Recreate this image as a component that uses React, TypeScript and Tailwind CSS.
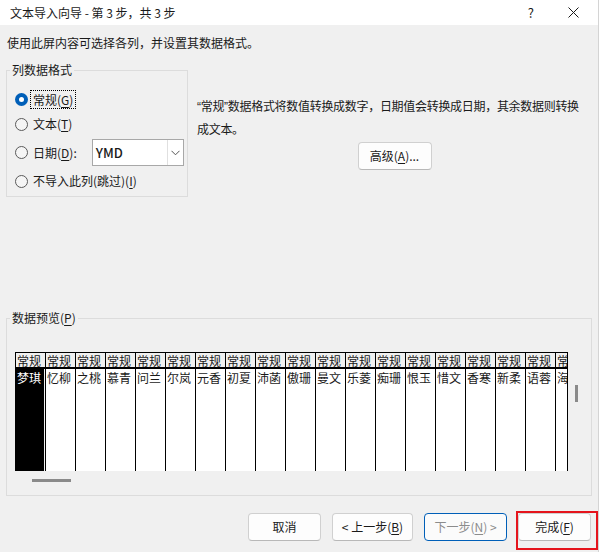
import React from 'react';

const names = [
  '梦琪', '忆柳', '之桃', '慕青', '问兰', '尔岚', '元香', '初夏', '沛菡', '傲珊',
  '曼文', '乐菱', '痴珊', '恨玉', '惜文', '香寒', '新柔', '语蓉', '海安',
];

const font = { fontFamily: '"Noto Sans CJK SC", "Microsoft YaHei", sans-serif' };

function Radio({ checked }: { checked?: boolean }) {
  if (checked) {
    return (
      <span className="w-[13px] h-[13px] rounded-full bg-[#005fb8] flex items-center justify-center shrink-0">
        <span className="w-[5px] h-[5px] rounded-full bg-white" />
      </span>
    );
  }
  return <span className="w-[13px] h-[13px] rounded-full border border-[#5a5a5a] bg-[#f5f5f5] shrink-0" />;
}

function Key({ k }: { k: string }) {
  return <span className="underline underline-offset-2">{k}</span>;
}

export default function App() {
  return (
    <div
      className="w-[599px] h-[552px] bg-[#f0f0f0] text-[12px] text-[#1a1a1a] flex flex-col overflow-hidden relative border-r border-[#d4d4d4]"
      style={font}
    >
      {/* title bar */}
      <div className="h-[25px] bg-white flex items-center shrink-0">
        <span className="pl-[10px] leading-[16px]">文本导入向导 - 第 3 步，共 3 步</span>
        <span className="ml-auto mr-[34px] text-[13px] leading-none">?</span>
        <svg width="11" height="11" viewBox="0 0 11 11" className="mr-[19px]">
          <path d="M0.5 0.5 L10.5 10.5 M10.5 0.5 L0.5 10.5" stroke="#1a1a1a" strokeWidth="1" />
        </svg>
      </div>

      <div className="pl-[7px] mt-[10px] leading-[16px]">使用此屏内容可选择各列，并设置其数据格式。</div>

      {/* format + description */}
      <div className="flex mt-[11px]">
        <fieldset className="ml-[6px] w-[182px] border border-[#dcdcdc] pb-[5px]">
          <legend className="ml-[3px] px-[2px] leading-[16px]">列数据格式</legend>
          <div className="flex flex-col gap-[5px] pt-[11px] pl-[8px]">
            <div className="h-[20px] flex items-center gap-[3px]">
              <Radio checked />
              <span className="outline outline-1 outline-dotted outline-black px-[2px] leading-[17px]">
                常规(<Key k="G" />)
              </span>
            </div>
            <div className="h-[20px] flex items-center gap-[5px]">
              <Radio />
              <span>文本(<Key k="T" />)</span>
            </div>
            <div className="h-[27px] flex items-center gap-[5px]">
              <Radio />
              <span>日期(<Key k="D" />):</span>
              <div className="ml-[10px] w-[92px] h-[27px] bg-white border border-[#a8a8a8] flex items-center">
                <span className="pl-[3px] text-[13px] font-medium flex-1">YMD</span>
                <span className="w-[16px] h-full border-l border-[#e0e0e0] flex items-center justify-center">
                  <svg width="9" height="6" viewBox="0 0 9 6">
                    <path d="M0.5 0.8 L4.5 4.8 L8.5 0.8" fill="none" stroke="#555" strokeWidth="1" />
                  </svg>
                </span>
              </div>
            </div>
            <div className="h-[20px] flex items-center gap-[5px]">
              <Radio />
              <span>不导入此列(跳过)(<Key k="I" />)</span>
            </div>
          </div>
        </fieldset>

        <div className="ml-[9px] w-[395px] pt-[33px] flex flex-col">
          <p className="leading-[21px] whitespace-nowrap tracking-[-0.3px]">
            <span style={{ fontFamily: '"Liberation Sans", sans-serif' }}>“</span>常规
            <span style={{ fontFamily: '"Liberation Sans", sans-serif' }}>”</span>
            数据格式将数值转换成数字，日期值会转换成日期，其余数据则转换
            <br />
            成文本。
          </p>
          <div className="flex justify-center mt-[3px]">
            <button className="w-[74px] h-[28px] bg-[#fdfdfd] border border-[#d0d0d0] border-b-[#b8b8b8] rounded-[4px]">
              高级(<Key k="A" />)...
            </button>
          </div>
        </div>
      </div>

      {/* data preview */}
      <fieldset className="mt-[113px] ml-[6px] w-[586px] h-[186px] border border-[#dcdcdc]">
        <legend className="ml-[3px] px-[2px] leading-[16px]">数据预览(<Key k="P" />)</legend>
        <div className="flex mt-[26px] pl-[8px]">
          <div className="w-[553px] h-[119px] flex overflow-hidden border-t border-r border-black">
            {names.map((n, i) => (
              <div key={n} className="w-[30px] shrink-0 border-l border-black flex flex-col">
                <div className="h-[16px] leading-[16px] border-b-2 border-black pl-px whitespace-nowrap overflow-hidden bg-[#f0f0f0]">
                  常规
                </div>
                <div
                  className={
                    i === 0
                      ? 'flex-1 bg-black text-white leading-[18px] pl-px mr-px whitespace-nowrap overflow-hidden'
                      : 'flex-1 bg-white leading-[18px] pl-px whitespace-nowrap overflow-hidden'
                  }
                >
                  {n}
                </div>
              </div>
            ))}
          </div>
          <div className="ml-[7px] mt-[33px] w-[3px] h-[17px] bg-[#8a8a8a]" />
        </div>
        <div className="ml-[25px] mt-[8px] w-[39px] h-[3px] bg-[#8a8a8a]" />
      </fieldset>

      {/* buttons */}
      <div className="flex mt-[17px] pl-[248px] gap-[11px]">
        <button className="w-[73px] h-[28px] bg-[#fdfdfd] border border-[#d0d0d0] border-b-[#b8b8b8] rounded-[4px]">
          取消
        </button>
        <button className="w-[81px] h-[28px] bg-[#fdfdfd] border border-[#d0d0d0] border-b-[#b8b8b8] rounded-[4px]">
          &lt; 上一步(<Key k="B" />)
        </button>
        <button className="w-[83px] h-[28px] bg-[#fbfbfb] border border-[#005fb8] rounded-[4px] text-[#8c8c8c]">
          下一步(<Key k="N" />) &gt;
        </button>
        <button className="w-[73px] h-[28px] bg-[#fdfdfd] border border-[#d0d0d0] border-b-[#b8b8b8] rounded-[4px]">
          完成(<Key k="F" />)
        </button>
      </div>

      {/* red highlight annotation */}
      <div className="absolute left-[516px] top-[511px] w-[82px] h-[39px] border-2 border-[#e5141c] pointer-events-none" />
    </div>
  );
}
